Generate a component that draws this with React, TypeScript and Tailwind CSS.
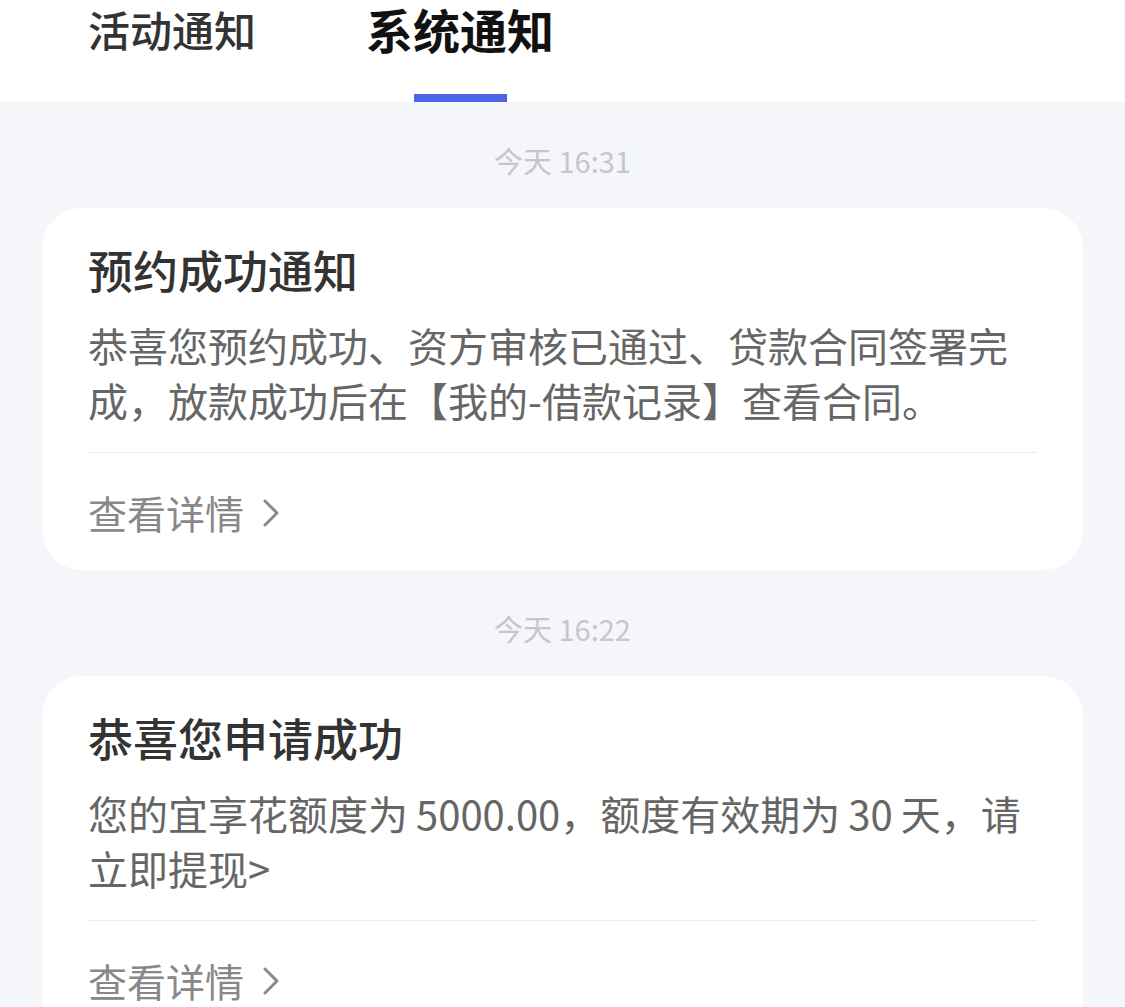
const notices = [
  {
    time: "今天 16:31",
    title: "预约成功通知",
    body: "恭喜您预约成功、资方审核已通过、贷款合同签署完成，放款成功后在【我的-借款记录】查看合同。",
  },
  {
    time: "今天 16:22",
    title: "恭喜您申请成功",
    body: "您的宜享花额度为\u20095000.00，额度有效期为\u200930\u2009天，请立即提现>",
  },
];

const Chevron = () => (
  <svg width="22" height="30" viewBox="0 0 22 30" fill="none" className="ml-[16px]">
    <path d="M5 3 L17 15 L5 27" stroke="#8a8a8a" strokeWidth="3" strokeLinecap="round" strokeLinejoin="round" />
  </svg>
);

const App: React.FC = () => {
  return (
    <div
      className="w-[1125px] h-[1007px] overflow-hidden bg-[#f5f6fa]"
      style={{ fontFamily: '"Noto Sans CJK SC", "Noto Sans", sans-serif' }}
    >
      <div className="bg-white h-[102px] flex items-start pl-[88px]">
        <div className="pt-[3px] text-[42px] leading-[52px] font-medium text-[#333333]">活动通知</div>
        <div className="ml-[110px] flex flex-col items-center">
          <div className="text-[47px] leading-[58px] font-bold text-[#111111]">系统通知</div>
          <div className="mt-[36px] w-[93px] h-[8px] bg-[#4a63e8]" />
        </div>
      </div>

      <div className="px-[42px]">
        {notices.map((n) => (
          <div key={n.time}>
            <div className="h-[106px] pt-[40px] text-center text-[29px] leading-[36px] text-[#c6c6ca]">{n.time}</div>
            <div className="bg-white rounded-[40px] px-[46px] pt-[40px] pb-[30px]">
              <div className="text-[45px] leading-[44px] font-medium text-[#333333]">{n.title}</div>
              <div className="mt-[26px] text-[40px] leading-[55px] text-[#666666]">{n.body}</div>
              <div className="mt-[24px] h-px bg-[#ececec]" />
              <div className="mt-[32px] flex items-center text-[39px] leading-[55px] text-[#888888]">
                查看详情
                <Chevron />
              </div>
            </div>
          </div>
        ))}
      </div>
    </div>
  );
};

export default App;
